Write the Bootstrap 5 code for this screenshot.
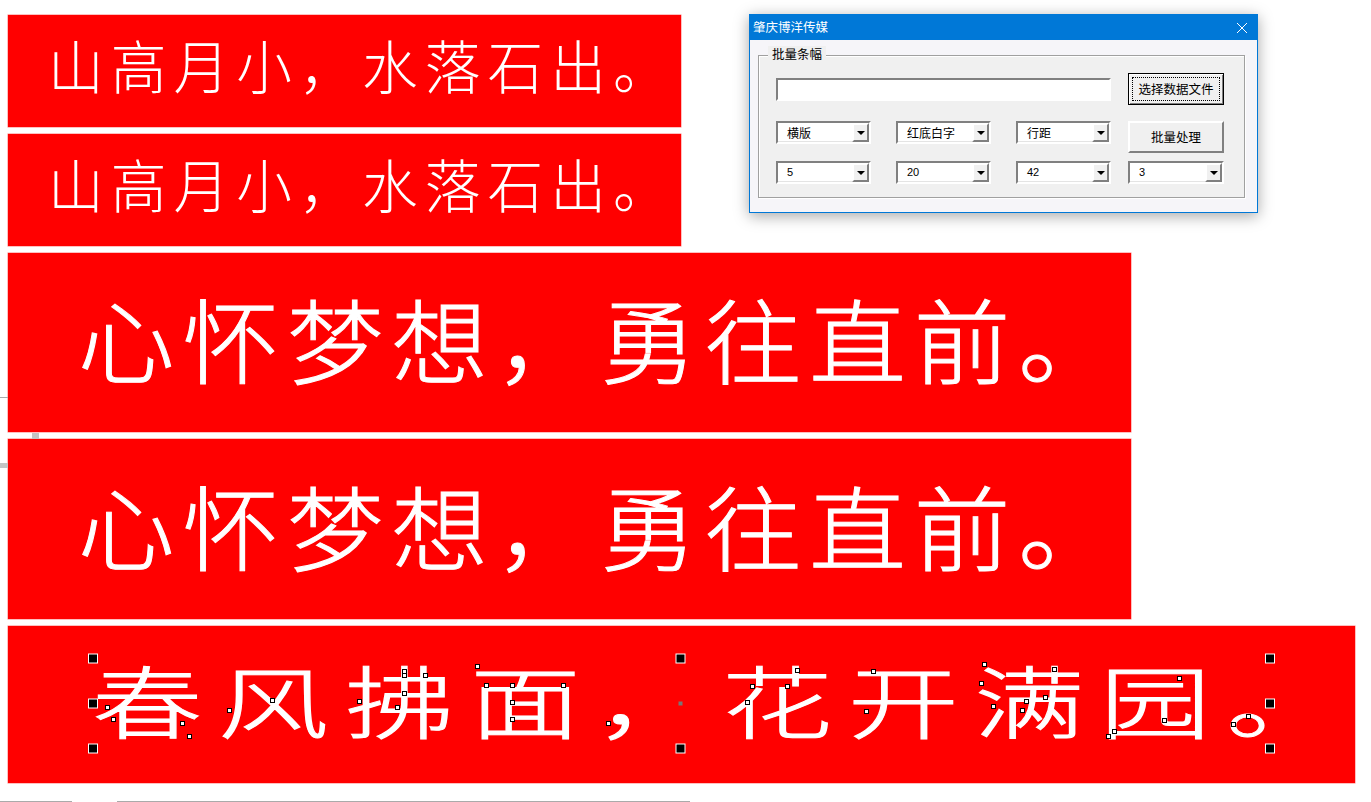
<!DOCTYPE html>
<html lang="zh">
<head>
<meta charset="utf-8">
<title>批量条幅</title>
<link href="https://cdn.jsdelivr.net/npm/bootstrap@5.3.0/dist/css/bootstrap.min.css" rel="stylesheet">
<style>
html,body{height:802px;overflow:hidden;background:#fff;}
body{font-family:"Noto Sans CJK SC","Liberation Sans",sans-serif;position:relative;}
.sheet{padding:14.5px 0 0 8px;gap:7px;}
.strip{background:#f00;color:#fff;white-space:nowrap;line-height:1;overflow:hidden;box-shadow:0 0 0 .5px #ff8080;}
.strip-sm{width:673px;height:112px;padding:0 0 13px 40px;}
.strip-md{width:1123px;height:179.5px;padding:0 0 10px 70px;}
.strip-lg{width:1347px;height:157.5px;padding:0 0 12px 84px;}
.strip span{display:inline-block;transform-origin:left center;}
.strip-sm span{font-size:58px;font-weight:300;letter-spacing:7.4px;transform:scaleX(.96);}
.strip-md span{font-size:92px;font-weight:300;letter-spacing:7.5px;transform:scaleX(1.05);-webkit-text-stroke:1px #fff;}
.strip-lg span{font-size:79px;font-weight:300;letter-spacing:11px;transform:scaleX(1.4);-webkit-text-stroke:1px #fff;}
.marks{position:absolute;left:0;top:0;pointer-events:none;}
.dlg{position:absolute;left:749px;top:14px;width:509px;height:198.5px;background:#f6f5f9;border:1px solid #0078d7;box-shadow:0 3px 14px rgba(0,0,0,.35);font-size:12px;color:#000;}
.dlg-title{height:25px;background:#0078d7;color:#fff;padding:0 5px 0 3px;font-size:12.5px;}
.dlg-group{position:relative;margin:15px 12px 0 8px;height:143px;background:#f0f0f0;border:1px solid #a0a0a0;box-shadow:inset 1px 1px 0 #fff,1px 1px 0 #fff;padding:17px 20px 0 17px;}
.dlg-legend{position:absolute;left:9px;top:-10px;background:#f0f0f0;padding:0 4px;line-height:16px;font-size:12.5px;}
.dlg-grid{display:grid;grid-template-columns:95px 95px 95px 96px;column-gap:25px;grid-template-rows:32px 32px 23px;row-gap:16px;}
.dlg-grid>.third{margin-top:-8px;}
.dlg-input{grid-column:span 3;align-self:center;height:23px;border:2px solid;border-color:#808080 #fff #fff #808080;background:#fff;border-radius:0;padding:0;box-shadow:none;}
.dlg-grid .col4{margin-left:-8px;width:96px;}
.dlg-btn{border-radius:0;padding:0;font-size:12.5px;line-height:1;color:#000;background:#f0f0f0;border:2px solid;border-color:#fff #808080 #808080 #fff;}
.dlg-btn-on{border:1px solid #000;box-shadow:inset 1px 1px 0 #fff,inset -1px -1px 0 #808080;position:relative;}
.dlg-btn-on::after{content:"";position:absolute;inset:3px;border:1px dotted #000;}
.combo{height:23px;background:#fff;border:2px solid;border-color:#808080 #fff #fff #808080;box-shadow:inset -1px -1px 0 #e4e4e4;padding-left:9px;font-size:12px;}
.combo-num{font-family:"Liberation Sans",sans-serif;font-size:11px;}
.combo-b{width:17px;height:19px;margin-left:auto;background:#f0f0f0;border:2px solid;border-color:#fff #808080 #808080 #fff;}
.combo-b::before{content:"";border-left:4px solid transparent;border-right:4px solid transparent;border-top:4px solid #000;}
</style>
</head>
<body>
<main class="sheet d-flex flex-column align-items-start">
  <div class="strip strip-sm d-flex align-items-center"><span>山高月小，水落石出。</span></div>
  <div class="strip strip-sm d-flex align-items-center"><span>山高月小，水落石出。</span></div>
  <div class="strip strip-md d-flex align-items-center"><span>心怀梦想，勇往直前。</span></div>
  <div class="strip strip-md d-flex align-items-center"><span>心怀梦想，勇往直前。</span></div>
  <div class="strip strip-lg d-flex align-items-center"><span>春风拂面，花开满园。</span></div>
</main>

<svg class="marks" width="1371" height="802" viewBox="0 0 1371 802" aria-hidden="true">
  <g fill="#aaa">
    <rect x="0" y="397" width="8" height="1"/>
    <rect x="0" y="801" width="72" height="1"/>
    <rect x="117" y="801" width="573" height="1"/>
  </g>
  <g fill="#c4c4c4">
    <rect x="32" y="433" width="7" height="6"/>
    <rect x="0" y="463" width="8" height="5"/>
  </g>
  <g fill="#000" stroke="#fff" stroke-width="1">
    <rect x="88.5" y="654" width="9" height="9"/><rect x="676" y="654" width="9" height="9"/><rect x="1265.5" y="654" width="9" height="9"/>
    <rect x="88.5" y="699" width="9" height="9"/><rect x="1265.5" y="699" width="9" height="9"/>
    <rect x="88.5" y="744" width="9" height="9"/><rect x="676" y="744" width="9" height="9"/><rect x="1265.5" y="744" width="9" height="9"/>
  </g>
  <rect x="678.5" y="701.5" width="4" height="4" fill="#777"/>
  <g fill="#fff" stroke="#000" stroke-width="1">
    <rect x="105.5" y="705.5" width="4" height="4"/><rect x="111.5" y="717.5" width="4" height="4"/><rect x="180.5" y="721.5" width="4" height="4"/><rect x="187.5" y="734.5" width="4" height="4"/>
    <rect x="227.5" y="708.5" width="4" height="4"/><rect x="270.5" y="698.5" width="4" height="4"/><rect x="357.5" y="699.5" width="4" height="4"/>
    <rect x="402.5" y="669.5" width="4" height="4"/><rect x="402.5" y="673.5" width="4" height="4"/><rect x="423.5" y="673.5" width="4" height="4"/><rect x="402.5" y="691.5" width="4" height="4"/><rect x="395.5" y="705.5" width="4" height="4"/>
    <rect x="475.5" y="664.5" width="4" height="4"/><rect x="484.5" y="683.5" width="4" height="4"/><rect x="510.5" y="683.5" width="4" height="4"/><rect x="561.5" y="683.5" width="4" height="4"/><rect x="510.5" y="700.5" width="4" height="4"/><rect x="510.5" y="717.5" width="4" height="4"/><rect x="606.5" y="721.5" width="4" height="4"/>
    <rect x="795.5" y="668.5" width="4" height="4"/><rect x="750.5" y="684.5" width="4" height="4"/><rect x="785.5" y="684.5" width="4" height="4"/><rect x="745.5" y="700.5" width="4" height="4"/>
    <rect x="871.5" y="669.5" width="4" height="4"/><rect x="864.5" y="709.5" width="4" height="4"/>
    <rect x="982.5" y="662.5" width="4" height="4"/><rect x="1052.5" y="667.5" width="4" height="4"/><rect x="979.5" y="681.5" width="4" height="4"/><rect x="1024.5" y="699.5" width="4" height="4"/><rect x="1043.5" y="695.5" width="4" height="4"/><rect x="991.5" y="704.5" width="4" height="4"/><rect x="1020.5" y="708.5" width="4" height="4"/>
    <rect x="1177.5" y="676.5" width="4" height="4"/><rect x="1162.5" y="718.5" width="4" height="4"/><rect x="1112.5" y="729.5" width="4" height="4"/><rect x="1106.5" y="734.5" width="4" height="4"/><rect x="1246.5" y="714.5" width="4" height="4"/><rect x="1231.5" y="722.5" width="4" height="4"/>
  </g>
</svg>

<section class="dlg">
  <header class="dlg-title d-flex align-items-center justify-content-between">
    <span>肇庆博洋传媒</span>
    <svg width="12" height="12" viewBox="0 0 12 12" class="me-1"><path d="M1 1l10 10M11 1L1 11" stroke="#fff" stroke-width="1" fill="none"/></svg>
  </header>
  <div class="dlg-group">
    <div class="dlg-legend">批量条幅</div>
    <div class="dlg-grid">
      <input class="dlg-input form-control" type="text" aria-label="数据文件">
      <button class="btn dlg-btn dlg-btn-on col4" type="button">选择数据文件</button>
      <div class="combo d-flex align-items-center">横版<i class="combo-b d-flex align-items-center justify-content-center"></i></div>
      <div class="combo d-flex align-items-center">红底白字<i class="combo-b d-flex align-items-center justify-content-center"></i></div>
      <div class="combo d-flex align-items-center">行距<i class="combo-b d-flex align-items-center justify-content-center"></i></div>
      <button class="btn dlg-btn col4" type="button">批量处理</button>
      <div class="combo combo-num third d-flex align-items-center">5<i class="combo-b d-flex align-items-center justify-content-center"></i></div>
      <div class="combo combo-num third d-flex align-items-center">20<i class="combo-b d-flex align-items-center justify-content-center"></i></div>
      <div class="combo combo-num third d-flex align-items-center">42<i class="combo-b d-flex align-items-center justify-content-center"></i></div>
      <div class="combo combo-num third col4 d-flex align-items-center">3<i class="combo-b d-flex align-items-center justify-content-center"></i></div>
    </div>
  </div>
</section>
<script src="https://cdn.jsdelivr.net/npm/bootstrap@5.3.0/dist/js/bootstrap.bundle.min.js"></script>
</body>
</html>
